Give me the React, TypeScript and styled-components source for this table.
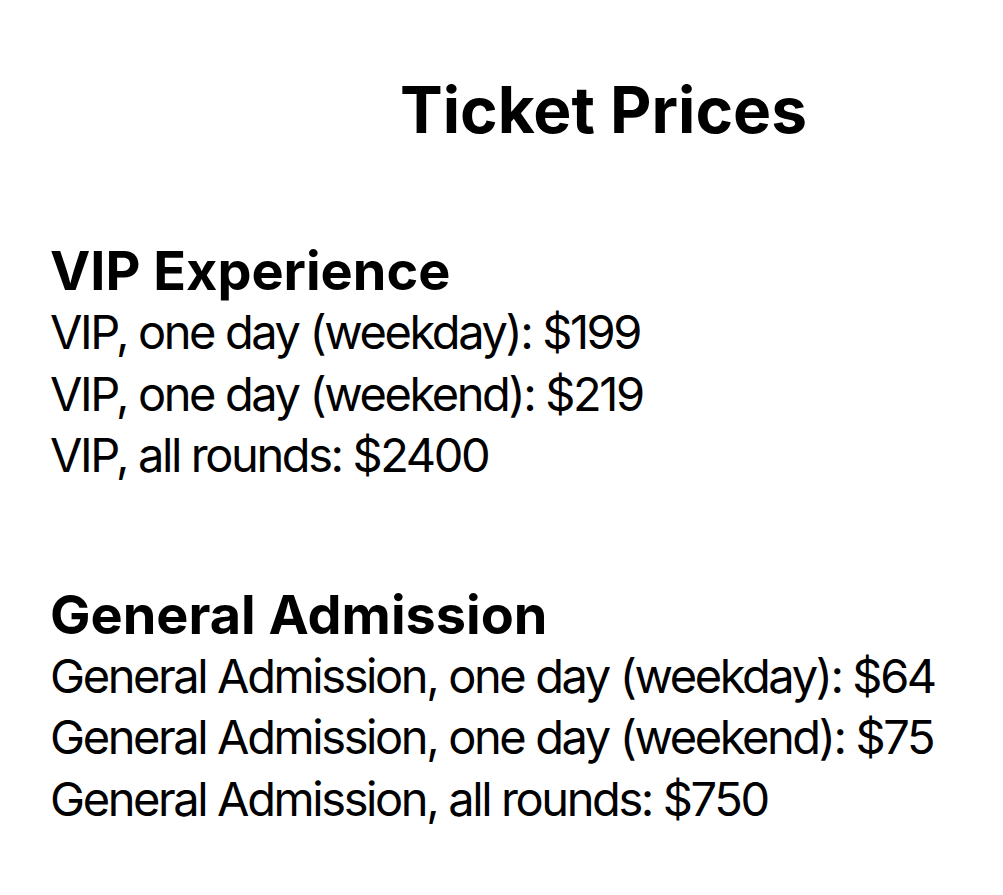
import styled, { createGlobalStyle } from 'styled-components';

const GlobalStyle = createGlobalStyle`
  html, body {
    margin: 0;
    padding: 0;
    background: #ffffff;
  }
  body {
    font-family: Inter, "Noto Sans", "Liberation Sans", sans-serif;
    color: #000000;
  }
`;

const Page = styled.div`
  width: 1003px;
  min-height: 895px;
  box-sizing: border-box;
  padding: 65px 0 0 50px;
`;

const Title = styled.h1`
  margin: 0 0 85px 154px;
  text-align: center;
  font-size: 64px;
  line-height: 90px;
  font-weight: 700;
  letter-spacing: 0;
`;

const Section = styled.section`
  display: flex;
  flex-direction: column;
  margin-bottom: 98px;
`;

const Heading = styled.h2`
  margin: 0;
  font-size: 54px;
  line-height: 61px;
  font-weight: 700;
  letter-spacing: 0;
`;

const PriceLine = styled.div`
  font-size: 47px;
  line-height: 61.5px;
  font-weight: 400;
  letter-spacing: -2.4px;
  white-space: nowrap;
`;

const sections = [
  {
    title: 'VIP Experience',
    items: [
      'VIP, one day (weekday): $199',
      'VIP, one day (weekend): $219',
      'VIP, all rounds: $2400',
    ],
  },
  {
    title: 'General Admission',
    items: [
      'General Admission, one day (weekday): $64',
      'General Admission, one day (weekend): $75',
      'General Admission, all rounds: $750',
    ],
  },
];

const App = () => {
  return (
    <>
      <GlobalStyle />
      <Page>
        <Title>Ticket Prices</Title>
        {sections.map((s) => (
          <Section key={s.title}>
            <Heading>{s.title}</Heading>
            {s.items.map((item) => (
              <PriceLine key={item}>{item}</PriceLine>
            ))}
          </Section>
        ))}
      </Page>
    </>
  );
};

export default App;
